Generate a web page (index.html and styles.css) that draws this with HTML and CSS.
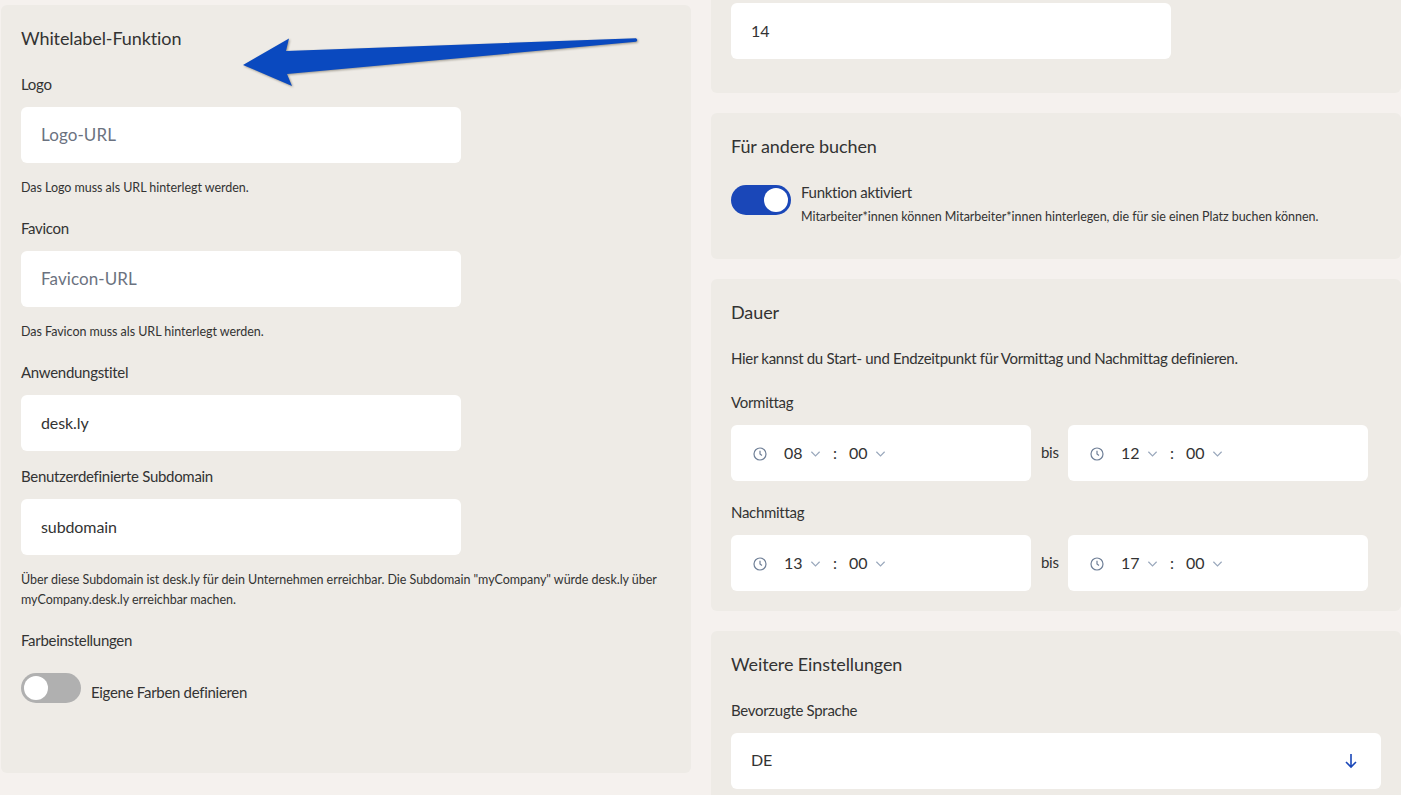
FILE: index.html
```html
<!DOCTYPE html>
<html lang="de">
<head>
<meta charset="utf-8">
<title>Einstellungen</title>
<link rel="stylesheet" href="styles.css">
</head>
<body>
<main class="page">
  <section class="card card-left">
    <h2 class="card-title">Whitelabel-Funktion</h2>
    <div class="field field-hinted">
      <label class="label">Logo</label>
      <input class="input" placeholder="Logo-URL">
      <p class="hint">Das Logo muss als URL hinterlegt werden.</p>
    </div>
    <div class="field field-hinted">
      <label class="label">Favicon</label>
      <input class="input" placeholder="Favicon-URL">
      <p class="hint">Das Favicon muss als URL hinterlegt werden.</p>
    </div>
    <div class="field">
      <label class="label">Anwendungstitel</label>
      <input class="input" value="desk.ly">
    </div>
    <div class="field field-hinted">
      <label class="label">Benutzerdefinierte Subdomain</label>
      <input class="input" value="subdomain">
      <p class="hint">Über diese Subdomain ist desk.ly für dein Unternehmen erreichbar. Die Subdomain "myCompany" würde desk.ly über myCompany.desk.ly erreichbar machen.</p>
    </div>
    <div class="field">
      <label class="label">Farbeinstellungen</label>
      <div class="toggle-row toggle-row-off">
        <span class="toggle toggle-off"><span class="knob"></span></span>
        <span class="toggle-text">Eigene Farben definieren</span>
      </div>
    </div>
  </section>

  <div class="column">
    <section class="card card-cut">
      <input class="input" value="14">
    </section>

    <section class="card">
      <h2 class="card-title">Für andere buchen</h2>
      <div class="toggle-row toggle-row-on">
        <span class="toggle toggle-on"><span class="knob"></span></span>
        <div>
          <div class="toggle-title">Funktion aktiviert</div>
          <p class="toggle-hint">Mitarbeiter*innen können Mitarbeiter*innen hinterlegen, die für sie einen Platz buchen können.</p>
        </div>
      </div>
    </section>

    <section class="card">
      <h2 class="card-title">Dauer</h2>
      <p class="intro">Hier kannst du Start- und Endzeitpunkt für Vormittag und Nachmittag definieren.</p>
      <label class="label label-time">Vormittag</label>
      <div class="time-row">
        <div class="time-box">
          <svg class="clock" viewBox="0 0 14 14"><circle cx="7" cy="7" r="6"/><path d="M7 3.800V7l2 1.400"/></svg>
          <span class="num">08</span>
          <svg class="chev" viewBox="0 0 12 8"><path d="M1.500 1.500 6 6l4.500-4.500"/></svg>
          <span class="colon">:</span>
          <span class="num">00</span>
          <svg class="chev" viewBox="0 0 12 8"><path d="M1.500 1.500 6 6l4.500-4.500"/></svg>
        </div>
        <span class="bis">bis</span>
        <div class="time-box">
          <svg class="clock" viewBox="0 0 14 14"><circle cx="7" cy="7" r="6"/><path d="M7 3.800V7l2 1.400"/></svg>
          <span class="num">12</span>
          <svg class="chev" viewBox="0 0 12 8"><path d="M1.500 1.500 6 6l4.500-4.500"/></svg>
          <span class="colon">:</span>
          <span class="num">00</span>
          <svg class="chev" viewBox="0 0 12 8"><path d="M1.500 1.500 6 6l4.500-4.500"/></svg>
        </div>
      </div>
      <label class="label label-time label-time-next">Nachmittag</label>
      <div class="time-row">
        <div class="time-box">
          <svg class="clock" viewBox="0 0 14 14"><circle cx="7" cy="7" r="6"/><path d="M7 3.800V7l2 1.400"/></svg>
          <span class="num">13</span>
          <svg class="chev" viewBox="0 0 12 8"><path d="M1.500 1.500 6 6l4.500-4.500"/></svg>
          <span class="colon">:</span>
          <span class="num">00</span>
          <svg class="chev" viewBox="0 0 12 8"><path d="M1.500 1.500 6 6l4.500-4.500"/></svg>
        </div>
        <span class="bis">bis</span>
        <div class="time-box">
          <svg class="clock" viewBox="0 0 14 14"><circle cx="7" cy="7" r="6"/><path d="M7 3.800V7l2 1.400"/></svg>
          <span class="num">17</span>
          <svg class="chev" viewBox="0 0 12 8"><path d="M1.500 1.500 6 6l4.500-4.500"/></svg>
          <span class="colon">:</span>
          <span class="num">00</span>
          <svg class="chev" viewBox="0 0 12 8"><path d="M1.500 1.500 6 6l4.500-4.500"/></svg>
        </div>
      </div>
    </section>

    <section class="card">
      <h2 class="card-title">Weitere Einstellungen</h2>
      <label class="label label-lang">Bevorzugte Sprache</label>
      <div class="select">
        <span>DE</span>
        <svg class="arrow-down" viewBox="0 0 14 16"><path d="M7 1v13M2 9l5 5 5-5"/></svg>
      </div>
    </section>
  </div>
</main>

<svg class="annotation" viewBox="0 0 420 70" aria-hidden="true">
  <path d="M3 30 49 3.500 46 16 396 3.200Q398.500 5 396 6.800L47 39 52 51Z"/>
</svg>
</body>
</html>
```

FILE: styles.css
```css
* { box-sizing: border-box; }

html, body {
  margin: 0;
  height: 795px;
  overflow: hidden;
}

body {
  background: #f5f1ee;
  color: #333;
  font-family: Lato, "Liberation Sans", sans-serif;
  font-size: 15px;
  letter-spacing: -0.3px;
}

.page {
  display: grid;
  grid-template-columns: 690px 690px;
  gap: 20px;
  padding: 5px 0 0 1px;
  align-items: start;
}

.column {
  display: flex;
  flex-direction: column;
  gap: 20px;
  margin-top: -5px;
}

.card {
  background: #eeebe6;
  border-radius: 6px;
  padding: 20px;
}

.card-left { height: 768px; }

.card-cut {
  height: 93px;
  padding-top: 3px;
  border-radius: 0 0 6px 6px;
}

.card-title {
  margin: 0;
  font-size: 18px;
  font-weight: 400;
  line-height: 26px;
  letter-spacing: -0.1px;
}

.label {
  display: block;
  line-height: 22px;
  margin-bottom: 12px;
}

.field { margin-top: 14px; }
.field-hinted + .field { margin-top: 19px; }
.card-left > .card-title + .field { margin-top: 22px; }

.input {
  display: block;
  width: 440px;
  height: 56px;
  padding: 0 20px 2px;
  border: 0;
  border-radius: 6px;
  background: #fff;
  color: #333;
  font: inherit;
  font-size: 16px;
  letter-spacing: -0.1px;
  outline: none;
}

.input::placeholder {
  color: #6b7280;
  opacity: 1;
  font-size: 17px;
  letter-spacing: 0.1px;
}

.hint {
  margin: 15px 0 0;
  font-size: 12.500px;
  line-height: 20px;
  letter-spacing: -0.04px;
}

.toggle-row {
  display: flex;
  gap: 10px;
}

.toggle-row-on { margin: 26px 0 14px; }
.toggle-row-off { margin-top: 22px; align-items: flex-start; }

.toggle {
  flex: none;
  display: flex;
  align-items: center;
  width: 60px;
  height: 30px;
  padding: 3px;
  border-radius: 15px;
}

.toggle-on { background: #1a47b8; justify-content: flex-end; }
.toggle-off { background: #b0b0b0; }

.knob {
  width: 24px;
  height: 24px;
  border-radius: 50%;
  background: #fff;
}

.toggle-text { line-height: 38px; height: 38px; }

.toggle-title { line-height: 15px; }

.toggle-hint {
  margin: 9px 0 0;
  font-size: 12.500px;
  line-height: 16px;
  letter-spacing: -0.04px;
}

.intro {
  margin: 22px 0 0;
  line-height: 22px;
}

.label-time { margin: 22px 0 12px; }
.label-time-next { margin-top: 20px; }
.label-lang { margin: 22px 0 12px; }

.time-row {
  display: flex;
  align-items: center;
}

.time-box {
  display: flex;
  align-items: center;
  width: 300px;
  height: 56px;
  padding: 0 0 2px 22px;
  background: #fff;
  border-radius: 6px;
  font-size: 16px;
  letter-spacing: -0.1px;
}

.bis {
  width: 37px;
  padding: 0 0 2px 10px;
}

.clock {
  flex: none;
  width: 14px;
  height: 14px;
  margin-top: 4px;
  fill: none;
  stroke: #6f7f97;
  stroke-width: 1.200;
}

.num { width: 26px; }

.clock + .num { margin-left: 17px; }

.chev {
  flex: none;
  width: 11px;
  height: 8px;
  margin-top: 4px;
  fill: none;
  stroke: #9aa8bc;
  stroke-width: 1.300;
}

.colon {
  width: 16px;
  margin-left: 12px;
}

.select {
  display: flex;
  align-items: center;
  justify-content: space-between;
  height: 56px;
  padding: 0 23px 4px 20px;
  background: #fff;
  border-radius: 6px;
  font-size: 16px;
  letter-spacing: -0.1px;
}

.arrow-down {
  width: 14px;
  height: 16px;
  margin-top: 4px;
  fill: none;
  stroke: #1a47b8;
  stroke-width: 1.600;
}

.annotation {
  position: absolute;
  left: 240px;
  top: 35px;
  width: 420px;
  height: 70px;
  filter: drop-shadow(1px 1px 1px rgba(60, 50, 30, .45));
}

.annotation path { fill: #0a49bf; }
```
